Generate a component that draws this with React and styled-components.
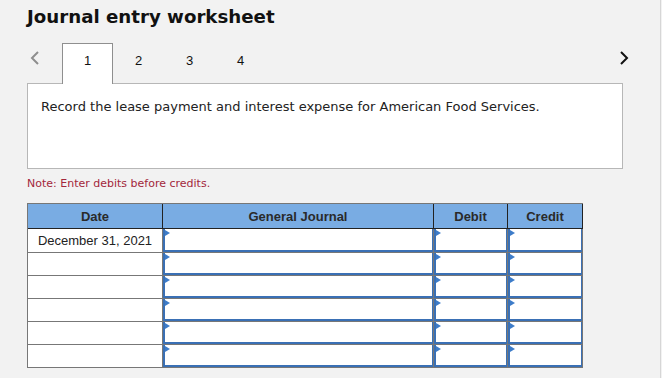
import React from "react";
import styled, { createGlobalStyle } from "styled-components";

const Global = createGlobalStyle`
  html, body { margin: 0; padding: 0; background: #f2f2f2; }
  * { box-sizing: border-box; }
`;

const Page = styled.div`
  box-sizing: content-box;
  width: 633px;
  min-height: 372px;
  padding: 6px 0 0 27px;
  border-right: 1px solid #d6d6d6;
  background: #f2f2f2;
  font-family: "DejaVu Sans", Verdana, sans-serif;
`;

const Title = styled.h1`
  margin: 0;
  font-family: "DejaVu Sans", Verdana, sans-serif;
  font-weight: bold;
  font-size: 18.2px;
  line-height: 22px;
  color: #111;
`;

const TabBar = styled.div`
  display: flex;
  align-items: flex-start;
  width: 605px;
  height: 41px;
  margin-top: 15px;
`;

const NavButton = styled.button`
  width: 16px;
  height: 14px;
  margin-top: 8px;
  padding: 0;
  border: 0;
  background: none;
  display: flex;
  align-items: center;
  justify-content: center;
  color: ${(p) => (p.$disabled ? "#8e8e8e" : "#111")};
  margin-left: ${(p) => (p.$right ? "auto" : "0")};
`;

const TabList = styled.div`
  display: flex;
  margin-left: 19px;
  height: 41px;
`;

const Tab = styled.div`
  position: relative;
  z-index: 1;
  width: 51px;
  height: 41px;
  padding-top: 9px;
  text-align: center;
  font-family: "Liberation Sans", Arial, sans-serif;
  font-size: 13px;
  line-height: 15px;
  color: #111;
  background: ${(p) => (p.$active ? "#fff" : "transparent")};
  border: 1px solid ${(p) => (p.$active ? "#8f8f8f" : "transparent")};
  border-bottom: none;
`;

const Panel = styled.div`
  width: 596px;
  height: 86px;
  margin-top: -1px;
  padding: 15px 13px;
  background: #fff;
  border: 1px solid #b7b7b7;
  font-size: 13px;
  line-height: 16px;
  color: #222;
`;

const Note = styled.div`
  margin-top: 8px;
  font-size: 11px;
  line-height: 14px;
  color: #a3273b;
`;

const Grid = styled.div`
  margin-top: 12px;
  width: 556px;
  border-left: 1px solid #777;
  border-top: 1px solid #777;
  font-family: "Liberation Sans", Arial, sans-serif;
  font-size: 13px;
  color: #222;
`;

const Row = styled.div`
  display: grid;
  grid-template-columns: 135px 271px 74px 75px;
  height: ${(p) => p.$h}px;
`;

const HeadCell = styled.div`
  display: flex;
  align-items: center;
  justify-content: center;
  background: #79ace3;
  border-right: 1px solid #222;
  border-bottom: 1px solid #222;
  font-weight: bold;
  color: #2a2a2a;
`;

const Cell = styled.div`
  display: flex;
  align-items: center;
  justify-content: center;
  background: #fff;
  border-right: 1px solid #777;
  border-bottom: 1px solid #777;
`;

const Entry = styled.div`
  position: relative;
  width: 100%;
  height: 100%;
  background: #fff;
  border-left: 2px solid #3a70b5;
  border-bottom: 2px solid #3a70b5;
  border-right: 1px solid #3a70b5;

  &::before {
    content: "";
    position: absolute;
    left: 0;
    top: 1px;
    border-left: 5px solid #3d7cc9;
    border-top: 3px solid transparent;
    border-bottom: 3px solid transparent;
  }
`;

const Chevron = ({ dir }) => (
  <svg width="10" height="14" viewBox="0 0 10 14" fill="none">
    <polyline
      points={dir === "left" ? "8,1 2,7 8,13" : "2,1 8,7 2,13"}
      stroke="currentColor"
      strokeWidth="2"
      strokeLinejoin="miter"
    />
  </svg>
);

const rows = [
  { date: "December 31, 2021", h: 24 },
  { date: "", h: 23 },
  { date: "", h: 23 },
  { date: "", h: 23 },
  { date: "", h: 23 },
  { date: "", h: 23 },
];

export default function App() {
  return (
    <>
      <Global />
      <Page>
        <Title>Journal entry worksheet</Title>
        <TabBar>
          <NavButton $disabled aria-label="previous">
            <Chevron dir="left" />
          </NavButton>
          <TabList>
            {[1, 2, 3, 4].map((n) => (
              <Tab key={n} $active={n === 1}>
                {n}
              </Tab>
            ))}
          </TabList>
          <NavButton $right aria-label="next">
            <Chevron dir="right" />
          </NavButton>
        </TabBar>
        <Panel>Record the lease payment and interest expense for American Food Services.</Panel>
        <Note>Note: Enter debits before credits.</Note>
        <Grid>
          <Row $h={25}>
            <HeadCell>Date</HeadCell>
            <HeadCell>General Journal</HeadCell>
            <HeadCell>Debit</HeadCell>
            <HeadCell>Credit</HeadCell>
          </Row>
          {rows.map((r, i) => (
            <Row key={i} $h={r.h}>
              <Cell>{r.date}</Cell>
              <Cell><Entry /></Cell>
              <Cell><Entry /></Cell>
              <Cell><Entry /></Cell>
            </Row>
          ))}
        </Grid>
      </Page>
    </>
  );
}
